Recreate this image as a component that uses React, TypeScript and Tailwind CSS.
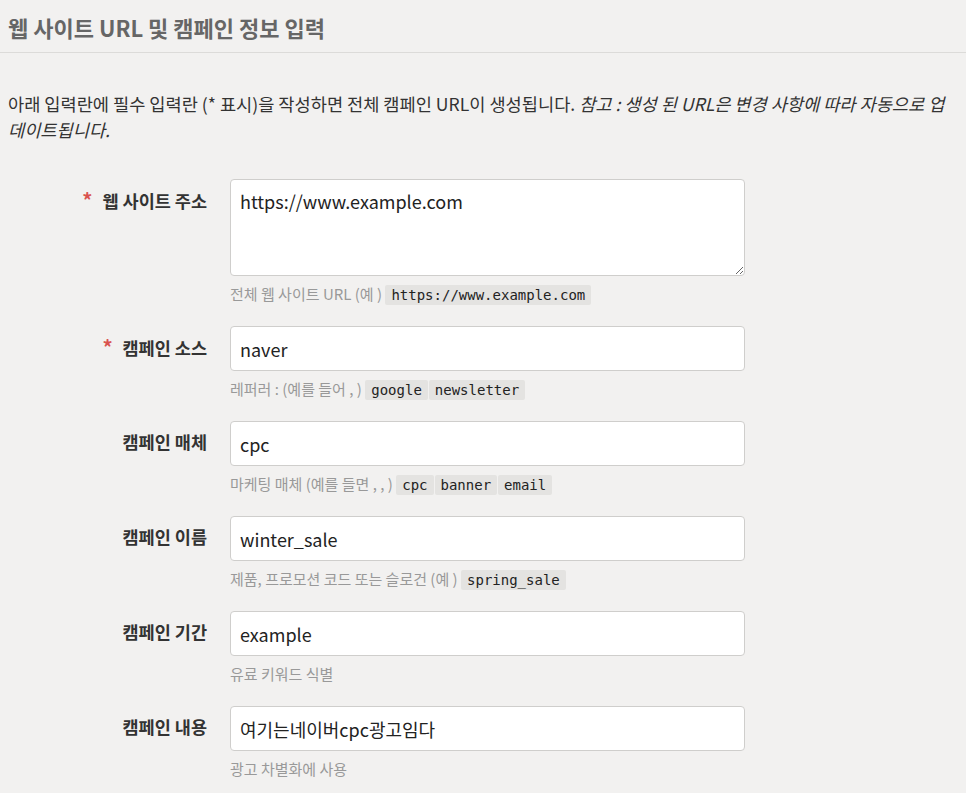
import React from "react";

type Field = {
  label: string;
  required?: boolean;
  value: string;
  multiline?: boolean;
  help: React.ReactNode;
};

function Code({ children }: { children: React.ReactNode }) {
  return (
    <code className="mr-px rounded-[2px] bg-[#e4e3e1] px-[6px] py-[2px] font-['DejaVu_Sans_Mono',monospace] text-[14px] text-[#222]">
      {children}
    </code>
  );
}

const fields: Field[] = [
  {
    label: "웹 사이트 주소",
    required: true,
    value: "https://www.example.com",
    multiline: true,
    help: (
      <>
        전체 웹 사이트 URL (예 ) <Code>https://www.example.com</Code>
      </>
    ),
  },
  {
    label: "캠페인 소스",
    required: true,
    value: "naver",
    help: (
      <>
        레퍼러 : (예를 들어 , ) <Code>google</Code>
        <Code>newsletter</Code>
      </>
    ),
  },
  {
    label: "캠페인 매체",
    value: "cpc",
    help: (
      <>
        마케팅 매체 (예를 들면 , , ) <Code>cpc</Code>
        <Code>banner</Code>
        <Code>email</Code>
      </>
    ),
  },
  {
    label: "캠페인 이름",
    value: "winter_sale",
    help: (
      <>
        제품, 프로모션 코드 또는 슬로건 (예 ) <Code>spring_sale</Code>
      </>
    ),
  },
  { label: "캠페인 기간", value: "example", help: "유료 키워드 식별" },
  { label: "캠페인 내용", value: "여기는네이버cpc광고임다", help: "광고 차별화에 사용" },
];

export default function App() {
  return (
    <div className="min-h-[793px] bg-[#f2f1f0] font-['Noto_Sans_CJK_KR','Noto_Sans',sans-serif] text-[#333]">
      <div className="px-2 pt-[11px]">
        <h1 className="text-[22px] font-semibold leading-[32px] text-[#666]">
          웹 사이트 URL 및 캠페인 정보 입력
        </h1>
      </div>
      <div className="mt-[9px] h-px bg-[#dcdbd9]" />
      <p className="px-2 pt-[38px] text-[17.6px] leading-[26px] text-[#333]">
        아래 입력란에 필수 입력란 (* 표시)을 작성하면 전체 캠페인 URL이 생성됩니다.{" "}
        <i>참고 : 생성 된 URL은 변경 사항에 따라 자동으로 업데이트됩니다.</i>
      </p>
      <div className="mt-[36px] grid grid-cols-[207px_515px] gap-x-[23px]">
        {fields.map((f) => (
          <React.Fragment key={f.label}>
            <label className="pt-[9px] text-right text-[17.5px] font-bold leading-[24px] text-[#333]">
              {f.required && <span className="mr-[10px] text-[20px] text-[#d9534f]">*</span>}
              {f.label}
            </label>
            <div className="pb-[20px]">
              {f.multiline ? (
                <textarea
                  defaultValue={f.value}
                  className="block h-[97px] w-full resize-y rounded-[4px] border border-[#cfcecc] bg-white px-[9px] py-[8px] text-[18px] leading-[26px] text-[#222] outline-none"
                />
              ) : (
                <input
                  defaultValue={f.value}
                  className="block h-[45px] w-full rounded-[4px] border border-[#cfcecc] bg-white px-[9px] text-[18px] text-[#222] outline-none"
                />
              )}
              <div className="mt-[6px] h-[24px] text-[15px] leading-[24px] text-[#999]">
                {f.help}
              </div>
            </div>
          </React.Fragment>
        ))}
      </div>
    </div>
  );
}
